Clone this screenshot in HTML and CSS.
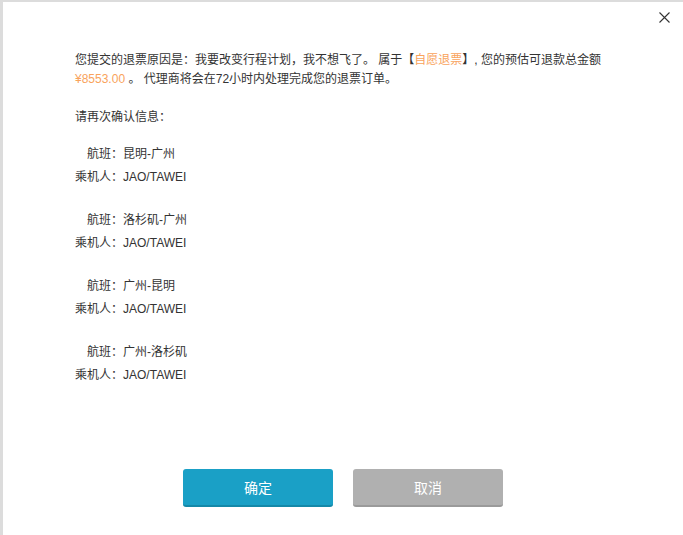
FILE: index.html
```html
<!DOCTYPE html>
<html lang="zh-CN">
<head>
<meta charset="utf-8">
<link rel="stylesheet" href="styles.css">
</head>
<body>
<div class="dialog">
  <button class="close" aria-label="关闭">
    <svg width="11" height="11" viewBox="0 0 11 11"><path d="M0.5 0.5 L10.5 10.5 M10.5 0.5 L0.5 10.5" stroke="#333" stroke-width="1.1" fill="none"/></svg>
  </button>
  <div class="content">
    <p class="msg">您提交的退票原因是：我要改变行程计划，我不想飞了。 属于【<span class="hl">自愿退票</span>】, 您的预估可退款总金额<br><span class="hl">¥8553.00</span> 。 代理商将会在72小时内处理完成您的退票订单。</p>
    <p class="confirm">请再次确认信息：</p>
    <div class="groups">
      <div class="group">
        <div class="row"><span class="label">航班：</span><span>昆明-广州</span></div>
        <div class="row"><span class="label">乘机人：</span><span>JAO/TAWEI</span></div>
      </div>
      <div class="group">
        <div class="row"><span class="label">航班：</span><span>洛杉矶-广州</span></div>
        <div class="row"><span class="label">乘机人：</span><span>JAO/TAWEI</span></div>
      </div>
      <div class="group">
        <div class="row"><span class="label">航班：</span><span>广州-昆明</span></div>
        <div class="row"><span class="label">乘机人：</span><span>JAO/TAWEI</span></div>
      </div>
      <div class="group">
        <div class="row"><span class="label">航班：</span><span>广州-洛杉矶</span></div>
        <div class="row"><span class="label">乘机人：</span><span>JAO/TAWEI</span></div>
      </div>
    </div>
  </div>
  <div class="actions">
    <button class="btn btn-ok">确定</button>
    <button class="btn btn-cancel">取消</button>
  </div>
</div>
</body>
</html>
```
FILE: styles.css
```css
html, body {
  margin: 0;
  padding: 0;
  background: #dcdcdc;
}
body {
  font-family: "Liberation Sans", "Noto Sans CJK SC", sans-serif;
  font-size: 12px;
  color: #333;
}
.dialog {
  position: relative;
  margin: 2px 0 0 3px;
  height: 533px;
  background: #fff;
  display: flex;
  flex-direction: column;
}
.close {
  position: absolute;
  top: 10px;
  right: 13px;
  border: 0;
  background: none;
  padding: 0;
  width: 11px;
  height: 11px;
  line-height: 0;
  cursor: pointer;
}
.content {
  padding: 49px 40px 0 72px;
  flex: 1;
}
.msg {
  margin: 0;
  line-height: 19px;
  width: 570px;
}
.hl {
  color: #f9a35c;
}
.confirm {
  margin: 19px 0 0;
  line-height: 19px;
}
.groups {
  margin-top: 16px;
  display: flex;
  flex-direction: column;
  gap: 20px;
}
.row {
  display: flex;
  line-height: 23px;
}
.label {
  flex: 0 0 48px;
  white-space: nowrap;
  text-align: right;
}
.actions {
  display: flex;
  gap: 20px;
  padding-left: 180px;
  padding-bottom: 28px;
}
.btn {
  width: 150px;
  height: 38px;
  border: 0;
  border-radius: 3px;
  color: #fff;
  font-family: "Liberation Sans", "Noto Sans CJK SC", sans-serif;
  font-size: 14px;
  cursor: pointer;
}
.btn-ok {
  background: #1aa0c6;
  border-bottom: 2px solid #1488a8;
}
.btn-cancel {
  background: #b0b0b0;
  border-bottom: 2px solid #9a9a9a;
}
```
